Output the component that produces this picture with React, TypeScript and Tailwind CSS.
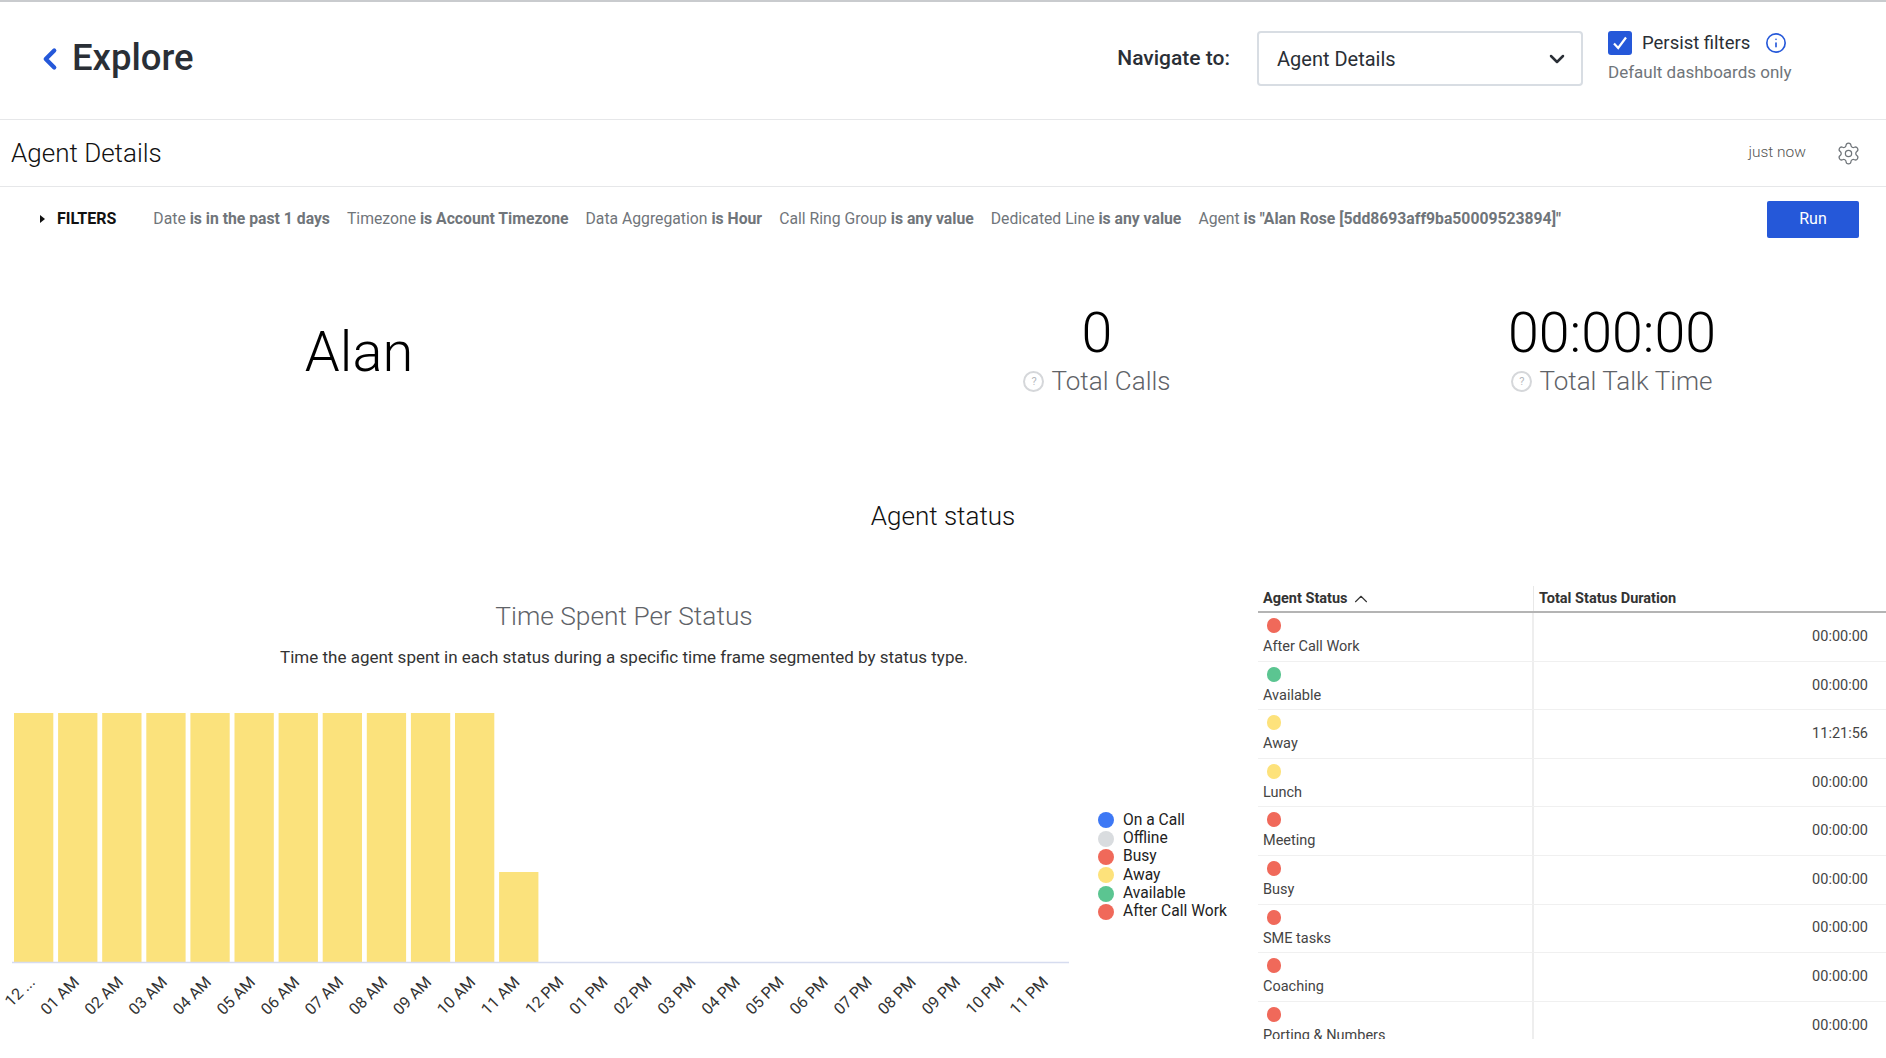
import { ChevronDown, ChevronLeft, ChevronUp, Info, Settings } from "lucide-react"

const filters = [
  ["Date", "is in the past 1 days"],
  ["Timezone", "is Account Timezone"],
  ["Data Aggregation", "is Hour"],
  ["Call Ring Group", "is any value"],
  ["Dedicated Line", "is any value"],
  ["Agent", 'is "Alan Rose [5dd8693aff9ba50009523894]"'],
]

const legend = [
  ["On a Call", "bg-[#3d78f5]"],
  ["Offline", "bg-[#d9dcdf]"],
  ["Busy", "bg-[#f0695a]"],
  ["Away", "bg-[#fde27b]"],
  ["Available", "bg-[#5bc591]"],
  ["After Call Work", "bg-[#f0695a]"],
]

const rows = [
  ["After Call Work", "bg-[#f0695a]", "00:00:00"],
  ["Available", "bg-[#5bc591]", "00:00:00"],
  ["Away", "bg-[#fde27b]", "11:21:56"],
  ["Lunch", "bg-[#fde27b]", "00:00:00"],
  ["Meeting", "bg-[#f0695a]", "00:00:00"],
  ["Busy", "bg-[#f0695a]", "00:00:00"],
  ["SME tasks", "bg-[#f0695a]", "00:00:00"],
  ["Coaching", "bg-[#f0695a]", "00:00:00"],
  ["Porting & Numbers", "bg-[#f0695a]", "00:00:00"],
]

const hours = [
  "12 ...", "01 AM", "02 AM", "03 AM", "04 AM", "05 AM", "06 AM", "07 AM", "08 AM", "09 AM", "10 AM", "11 AM",
  "12 PM", "01 PM", "02 PM", "03 PM", "04 PM", "05 PM", "06 PM", "07 PM", "08 PM", "09 PM", "10 PM", "11 PM",
]

function Help() {
  return (
    <span className="flex h-[21px] w-[21px] shrink-0 items-center justify-center rounded-full border-2 border-[#d5d7da] text-[11px] leading-none text-[#b5b8bc]">
      ?
    </span>
  )
}

function Stat({ value, label, className }: { value: string; label: string; className: string }) {
  return (
    <div className={`flex flex-col items-center ${className}`}>
      <div className="text-[55.5px] font-light leading-[66px] text-black">{value}</div>
      <div className="-mt-[3px] flex items-center gap-[7px]">
        <Help />
        <span className="text-[26px] font-light leading-[34px] text-[#5f6368]">{label}</span>
      </div>
    </div>
  )
}

// bars are 39.3 wide on a 44.1 pitch, labels hang off the axis at 45deg
function Chart() {
  return (
    <svg width="1075" height="320" viewBox="0 0 1075 320" className="block">
      {hours.slice(0, 12).map((h, i) => (
        <rect
          key={h}
          x={14 + i * 44.1}
          y={i === 11 ? 159 : 0}
          width={39.3}
          height={i === 11 ? 90 : 249}
          fill="#fbe27c"
        />
      ))}
      <line x1="12" y1="249.5" x2="1069" y2="249.5" stroke="#d6dcef" strokeWidth="1.5" />
      {hours.map((h, i) => {
        const x = 36 + i * 44.05
        return (
          <text
            key={h}
            x={x}
            y={270}
            textAnchor="end"
            transform={`rotate(-45 ${x} 270)`}
            fontFamily="Roboto, sans-serif"
            fontSize="16"
            fill="#333"
          >
            {h}
          </text>
        )
      })}
    </svg>
  )
}

export default function App() {
  return (
    <div className="h-[1058px] w-[1886px] overflow-hidden bg-white font-['Roboto',sans-serif] text-[#2a2f36]">
      <header className="flex h-[120px] items-center border-b border-t-2 border-[#e6e7e9] border-t-[#c9cbce] pb-[4px]">
        <ChevronLeft className="ml-[33px] text-[#2558d9]" size={34} strokeWidth={3} />
        <h1 className="ml-[5px] text-[36.5px] font-medium leading-none">Explore</h1>
        <span className="ml-auto text-[21px] font-medium">Navigate to:</span>
        <div className="ml-[27px] flex h-[55px] w-[326px] items-center justify-between rounded-[4px] border-2 border-[#d8dde3] pl-[18px] pr-[12px] text-[20px]">
          Agent Details
          <ChevronDown size={24} strokeWidth={2.5} />
        </div>
        <div className="ml-[25px] mr-[94px] w-[184px]">
          <div className="flex items-center">
            <span className="flex h-6 w-6 items-center justify-center rounded-[3px] bg-[#2558d9]">
              <svg width="18" height="18" viewBox="0 0 18 18" fill="none" stroke="#fff" strokeWidth="2.2">
                <path d="M3 9.5 7.2 14 15 3.5" />
              </svg>
            </span>
            <span className="ml-[10px] text-[18.5px] leading-6">Persist filters</span>
            <Info className="ml-[15px] text-[#2558d9]" size={22} strokeWidth={1.8} />
          </div>
          <div className="mt-[5px] whitespace-nowrap text-[17px] text-[#70757a]">Default dashboards only</div>
        </div>
      </header>

      <div className="flex h-[67px] items-center border-b border-[#e6e7e9] pl-[11px] pr-[25px]">
        <h2 className="text-[26px] font-light text-[#111]">Agent Details</h2>
        <span className="ml-auto text-[15.5px] font-light text-[#555]">just now</span>
        <Settings className="ml-[30px] text-[#70757a]" size={25} strokeWidth={1.2} />
      </div>

      <div className="flex h-[66px] items-center pb-[2px] pl-[40px] pr-[27px]">
        <span className="h-0 w-0 border-y-[4.5px] border-l-[5px] border-y-transparent border-l-[#111]" />
        <span className="ml-[12px] text-[16px] font-bold text-[#111]">FILTERS</span>
        <div className="ml-[37px] flex gap-[17px] text-[15.74px] text-[#70757a]">
          {filters.map(([name, value]) => (
            <span key={name} className="whitespace-nowrap">
              {name} <b className="font-bold">{value}</b>
            </span>
          ))}
        </div>
        <button className="ml-auto h-[37px] w-[92px] rounded-[2px] bg-[#2558d9] text-[16px] text-white">Run</button>
      </div>

      <div className="flex h-[233px] pt-[48px]">
        <div className="w-[718px] pt-[18px] text-center text-[56px] font-light leading-[66px] text-black">Alan</div>
        <Stat value="0" label="Total Calls" className="w-[758px]" />
        <Stat value="00:00:00" label="Total Talk Time" className="w-[272px]" />
      </div>

      <h3 className="h-[100px] pt-[8px] text-center text-[26px] font-light leading-[44px] text-[#111]">Agent status</h3>

      <div className="flex">
        <div className="w-[1258px] shrink-0">
          <div className="w-[1248px] pt-[12px] text-center">
            <div className="text-[26.3px] font-light leading-[36px] text-[#5f6368]">Time Spent Per Status</div>
            <div className="mt-[12px] text-[17px] leading-[22px] text-[#333]">
              Time the agent spent in each status during a specific time frame segmented by status type.
            </div>
          </div>
          <div className="relative mt-[45px]">
            <Chart />
            <ul className="absolute left-[1098px] top-[98px]">
              {legend.map(([name, color]) => (
                <li key={name} className="flex h-[18.4px] items-center gap-[9px] whitespace-nowrap text-[15.6px] text-[#222]">
                  <span className={`h-4 w-4 rounded-full ${color}`} />
                  {name}
                </li>
              ))}
            </ul>
          </div>
        </div>

        <div className="h-[453px] grow overflow-hidden">
          <div className="flex h-[27px] border-b-2 border-[#b4b4b4] text-[14.5px] font-bold text-[#333]">
            <div className="flex w-[276px] items-center gap-[2px] border-r border-[#e8e8e8] pl-[5px]">
              Agent Status <ChevronUp size={22} strokeWidth={1.2} />
            </div>
            <div className="flex items-center pl-[5px]">Total Status Duration</div>
          </div>
          {rows.map(([name, color, time]) => (
            <div key={name} className="flex h-[48.6px] shrink-0 border-b border-[#f0f0f0] text-[14.5px] text-[#444]">
              <div className="w-[276px] border-r-2 border-[#eeeeee] pl-[5px] pt-[5px]">
                <span className={`ml-[4px] block h-[15px] w-[14px] rounded-full ${color}`} />
                <div className="mt-[4px] leading-[20px]">{name}</div>
              </div>
              <div className="flex grow items-center justify-end pr-[18px]">{time}</div>
            </div>
          ))}
        </div>
      </div>
    </div>
  )
}
